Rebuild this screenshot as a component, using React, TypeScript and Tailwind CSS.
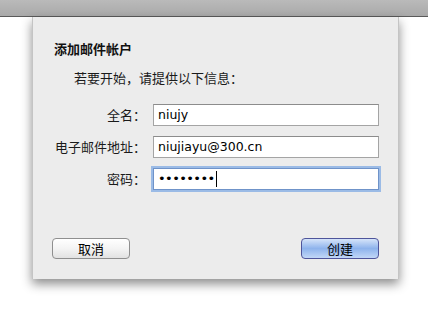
const cjk = "font-['Noto_Sans_CJK_SC','Noto_Sans',sans-serif]";
const latin = "font-['DejaVu_Sans','Noto_Sans_CJK_SC',sans-serif]";

function Field({ label, children, focused }: { label: string; children: React.ReactNode; focused?: boolean }) {
  return (
    <>
      <label className={`${cjk} text-[13px] leading-[22px] text-[#1a1a1a] text-right whitespace-nowrap`}>{label}</label>
      <div
        className={
          focused
            ? 'h-[22px] bg-white border border-[#6f93c9] shadow-[0_0_0_2px_#9bbbe6] flex items-center pl-[4px]'
            : 'h-[22px] bg-white border border-[#a4a4a4] border-t-[#8c8c8c] flex items-center pl-[4px]'
        }
      >
        {children}
      </div>
    </>
  );
}

export default function App() {
  return (
    <div className="w-[428px] h-[327px] bg-white overflow-hidden">
      <div className="h-[17px] bg-gradient-to-b from-[#bababa] to-[#a9a9a9] border-b border-[#5a5a5a]" />
      <div className="ml-[32px] w-[367px] h-[262px] bg-[#ececec] border-x border-[#c4c4c4] shadow-[0_5px_10px_rgba(0,0,0,0.45)] flex flex-col">
        <h1 className={`${cjk} mt-[23px] ml-[21px] text-[13px] leading-[18px] font-bold text-[#111]`}>添加邮件帐户</h1>
        <p className={`${cjk} mt-[11px] ml-[41px] text-[13px] leading-[18px] text-[#1a1a1a]`}>若要开始，请提供以下信息：</p>
        <div className="mt-[17px] ml-[21px] grid grid-cols-[92px_226px] gap-x-[7px] gap-y-[10px]">
          <Field label="全名：">
            <span className={`${latin} text-[12.5px] text-black`}>niujy</span>
          </Field>
          <Field label="电子邮件地址：">
            <span className={`${latin} text-[12.5px] text-black`}>niujiayu@300.cn</span>
          </Field>
          <Field label="密码：" focused>
            <span className={`${latin} text-[13px] text-black tracking-[-0.6px]`}>••••••••</span>
            <span className="ml-[1px] w-[1px] h-[16px] bg-black" />
          </Field>
        </div>
        <div className="mt-auto mb-[20px] mx-[19px] flex justify-between">
          <button className={`${cjk} w-[78px] h-[21px] rounded-[4px] border border-[#8f8f8f] bg-gradient-to-b from-white via-[#f4f4f4] to-[#e2e2e2] text-[13px] leading-[19px] text-black`}>
            取消
          </button>
          <button className={`${cjk} w-[78px] h-[21px] rounded-[4px] border border-[#4f559b] bg-gradient-to-b from-[#d6e4f9] via-[#8eb3ec] to-[#c2d7f7] text-[13px] leading-[19px] text-black`}>
            创建
          </button>
        </div>
      </div>
    </div>
  );
}
